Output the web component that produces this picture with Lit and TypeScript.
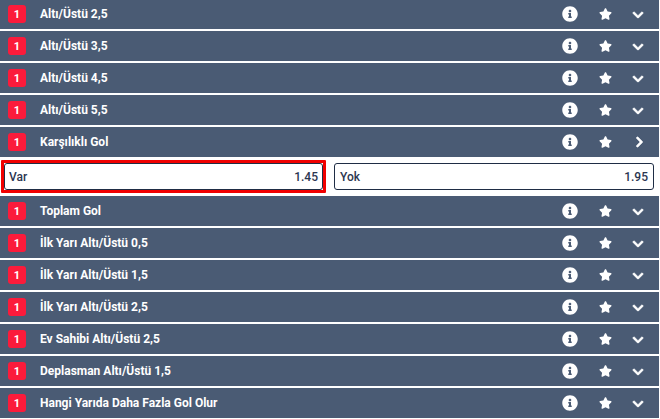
import { LitElement, html, css, svg } from "lit";
import { customElement } from "lit/decorators.js";

const INFO = svg`<path d="M256 8C119.043 8 8 119.083 8 256c0 136.997 111.043 248 248 248s248-111.003 248-248C504 119.083 392.957 8 256 8zm0 110c23.196 0 42 18.804 42 42s-18.804 42-42 42-42-18.804-42-42 18.804-42 42-42zm56 254c0 6.627-5.373 12-12 12h-88c-6.627 0-12-5.373-12-12v-24c0-6.627 5.373-12 12-12h12v-64h-12c-6.627 0-12-5.373-12-12v-24c0-6.627 5.373-12 12-12h64c6.627 0 12 5.373 12 12v100h12c6.627 0 12 5.373 12 12v24z"/>`;
const STAR = svg`<path d="M259.3 17.8L194 150.2 47.9 171.5c-26.2 3.8-36.7 36.1-17.7 54.6l105.7 103-25 145.5c-4.5 26.3 23.2 46 46.4 33.7L288 439.6l130.7 68.7c23.2 12.2 50.9-7.4 46.4-33.7l-25-145.5 105.7-103c19-18.5 8.5-50.8-17.7-54.6L382 150.2 316.7 17.8c-11.7-23.6-45.6-23.9-57.4 0z"/>`;
const DOWN = svg`<path d="M207.029 381.476L12.686 187.132c-9.373-9.373-9.373-24.569 0-33.941l22.667-22.667c9.357-9.357 24.522-9.375 33.901-.04L224 284.505l154.745-154.021c9.379-9.335 24.544-9.317 33.901.04l22.667 22.667c9.373 9.373 9.373 24.569 0 33.941L240.971 381.476c-9.373 9.372-24.569 9.372-33.942 0z"/>`;
const RIGHT = svg`<path d="M285.476 272.971L91.132 467.314c-9.373 9.373-24.569 9.373-33.941 0l-22.667-22.667c-9.357-9.357-9.375-24.522-.04-33.901L188.505 256 34.484 101.255c-9.335-9.379-9.317-24.544.04-33.901l22.667-22.667c9.373-9.373 24.569-9.373 33.941 0L285.475 239.03c9.373 9.372 9.373 24.568.001 33.941z"/>`;

const before = ["Altı/Üstü 2,5", "Altı/Üstü 3,5", "Altı/Üstü 4,5", "Altı/Üstü 5,5"];
const after = [
  "Toplam Gol",
  "İlk Yarı Altı/Üstü 0,5",
  "İlk Yarı Altı/Üstü 1,5",
  "İlk Yarı Altı/Üstü 2,5",
  "Ev Sahibi Altı/Üstü 2,5",
  "Deplasman Altı/Üstü 1,5",
  "Hangi Yarıda Daha Fazla Gol Olur",
];

@customElement("app-root")
export class AppRoot extends LitElement {
  static styles = css`
    :host {
      display: block;
      width: 659px;
      height: 419px;
      overflow: hidden;
      background: #fff;
      font-family: Roboto, "Liberation Sans", sans-serif;
    }
    .list {
      display: flex;
      flex-direction: column;
      gap: 2px;
      margin-top: -1px;
    }
    .row {
      display: flex;
      align-items: center;
      height: 30px;
      flex: none;
      background: #4a5b74;
      color: #fff;
      font-size: 12px;
      font-weight: 700;
    }
    .badge {
      display: flex;
      align-items: center;
      justify-content: center;
      width: 18px;
      height: 18px;
      margin: 0 14px 0 8px;
      border-radius: 3px;
      background: #fb1b3b;
      font-size: 11px;
    }
    .title {
      flex: 1;
    }
    .icon {
      display: flex;
      justify-content: center;
      align-items: center;
      fill: #fff;
    }
    .info {
      width: 16px;
      margin-right: 20px;
      margin-top: -1px;
    }
    .info svg {
      width: 16px;
      height: 16px;
    }
    .star {
      width: 14px;
      margin-right: 19px;
    }
    .star svg {
      width: 13px;
      height: 12px;
    }
    .chev {
      width: 14px;
      margin-right: 14px;
      stroke: #fff;
      stroke-width: 30;
    }
    .chev svg {
      width: 12px;
      height: 12px;
    }
    .chev .down {
      margin-top: 1px;
    }
    .chev .right {
      margin-left: 3px;
    }
    .odds {
      display: grid;
      grid-template-columns: 319px 320px;
      gap: 11px;
      padding: 6px 4px 0;
      margin: -2px 0;
      height: 39px;
      box-sizing: border-box;
      flex: none;
    }
    .odd {
      position: relative;
      display: flex;
      align-items: center;
      justify-content: space-between;
      height: 27px;
      box-sizing: border-box;
      padding: 0 5px;
      border: 1px solid #1f2d45;
      border-radius: 3px;
      background: #fff;
      color: #2b3650;
      font-size: 12px;
      font-weight: 500;
    }
    .selected {
      padding: 0 4px;
    }
    .selected::after {
      content: "";
      position: absolute;
      inset: -4px;
      border: 3px solid #f00000;
      border-radius: 1px;
    }
  `;

  private row(title: string, open = false) {
    return html`<div class="row">
      <span class="badge">1</span>
      <span class="title">${title}</span>
      <span class="icon info"><svg viewBox="0 0 512 512">${INFO}</svg></span>
      <span class="icon star"><svg viewBox="0 0 576 512">${STAR}</svg></span>
      <span class="icon chev"
        >${open
          ? html`<svg class="right" viewBox="0 0 320 512">${RIGHT}</svg>`
          : html`<svg class="down" viewBox="0 0 448 512">${DOWN}</svg>`}</span
      >
    </div>`;
  }

  render() {
    return html`<div class="list">
      ${before.map((t) => this.row(t))} ${this.row("Karşılıklı Gol", true)}
      <div class="odds">
        <div class="odd selected"><span>Var</span><span>1.45</span></div>
        <div class="odd"><span>Yok</span><span>1.95</span></div>
      </div>
      ${after.map((t) => this.row(t))}
    </div>`;
  }
}
